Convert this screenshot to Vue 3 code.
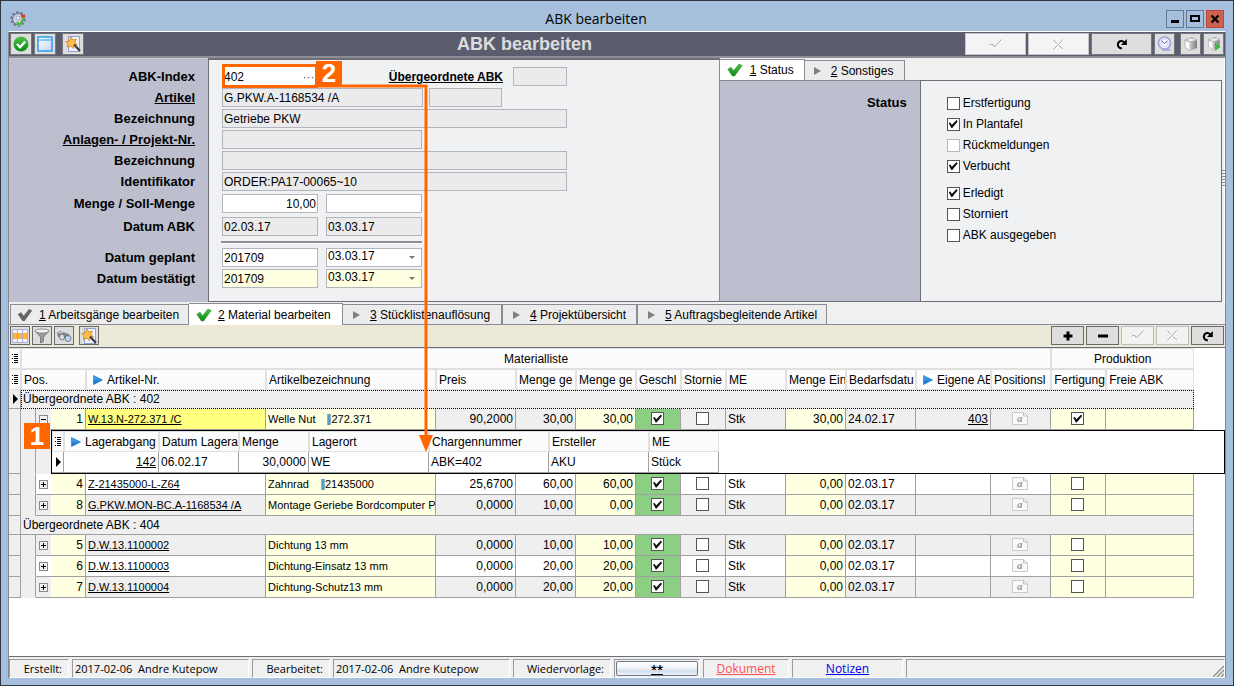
<script setup>
import { ref } from 'vue'

const infoTabs = [
  { no: '1', title: 'Status', active: true, w: 'w-status' },
  { no: '2', title: 'Sonstiges', active: false, w: 'w-misc' }
]
const statusFlags = ref([
  { id: 'first', text: 'Erstfertigung', on: false },
  { id: 'plan', text: 'In Plantafel', on: true },
  { id: 'feedback', text: 'Rückmeldungen', on: false, off: true },
  { id: 'booked', text: 'Verbucht', on: true },
  { id: 'done', text: 'Erledigt', on: true, gap: true },
  { id: 'cancelled', text: 'Storniert', on: false },
  { id: 'issued', text: 'ABK ausgegeben', on: false }
])
const detailTabs = [
  { no: '1', title: 'Arbeitsgänge bearbeiten', icon: 'gray', w: 'w-a' },
  { no: '2', title: 'Material bearbeiten', icon: 'green', active: true, w: 'w-b' },
  { no: '3', title: 'Stücklistenauflösung', icon: 'play', w: 'w-c' },
  { no: '4', title: 'Projektübersicht', icon: 'play', w: 'w-d' },
  { no: '5', title: 'Auftragsbegleitende Artikel', icon: 'play', w: 'w-e' }
]
const columns = [
  'Artikelbezeichnung', 'Preis', 'Menge ge', 'Menge ge', 'Geschl', 'Stornie', 'ME', 'Menge Ein', 'Bedarfsdatu'
]
const groups = ref([
  {
    abk: '402', current: true,
    rows: [
      { pos: 1, art: 'W.13.N-272.371 /C', name: 'Welle Nut', code: '272.371', price: '90,2000', m1: '30,00', m2: '30,00', unit: '30,00', date: '24.02.17', own: '403', made: true, open: true, tone: 'gray', hot: true },
      { pos: 4, art: 'Z-21435000-L-Z64', name: 'Zahnrad', code: '21435000', price: '25,6700', m1: '60,00', m2: '60,00', unit: '0,00', date: '02.03.17', own: '', made: false, tone: 'white' },
      { pos: 8, art: 'G.PKW.MON-BC.A-1168534 /A', name: 'Montage Geriebe Bordcomputer Ph', code: '', price: '0,0000', m1: '10,00', m2: '0,00', unit: '0,00', date: '02.03.17', own: '', made: false, tone: 'gray' }
    ]
  },
  {
    abk: '404',
    rows: [
      { pos: 5, art: 'D.W.13.1100002', name: 'Dichtung 13 mm', code: '', price: '0,0000', m1: '10,00', m2: '10,00', unit: '0,00', date: '02.03.17', own: '', made: false, tone: 'gray' },
      { pos: 6, art: 'D.W.13.1100003', name: 'Dichtung-Einsatz 13 mm', code: '', price: '0,0000', m1: '20,00', m2: '20,00', unit: '0,00', date: '02.03.17', own: '', made: false, tone: 'white' },
      { pos: 7, art: 'D.W.13.1100004', name: 'Dichtung-Schutz13 mm', code: '', price: '0,0000', m1: '20,00', m2: '20,00', unit: '0,00', date: '02.03.17', own: '', made: false, tone: 'gray' }
    ]
  }
])
</script>

<template>
  <div class="window">
    <svg class="defs" width="0" height="0" aria-hidden="true">
      <defs>
        <linearGradient id="gGreen" x1="0" y1="0" x2="0" y2="1"><stop offset="0" stop-color="#4fc24a" /><stop offset="1" stop-color="#0b8a12" /></linearGradient>
        <linearGradient id="gBlue" x1="0" y1="0" x2="0" y2="1"><stop offset="0" stop-color="#55b4f5" /><stop offset="1" stop-color="#0a62c4" /></linearGradient>
        <linearGradient id="gPane" x1="0" y1="0" x2="1" y2="1"><stop offset="0" stop-color="#ffffff" /><stop offset="1" stop-color="#c9d2f7" /></linearGradient>
        <linearGradient id="gCube" x1="0" y1="0" x2="1" y2="0"><stop offset="0" stop-color="#c8c8c8" /><stop offset="1" stop-color="#7c7c7c" /></linearGradient>
      </defs>
      <symbol id="i-wand" viewBox="0 0 16 16">
        <rect x="3.500" y="0.500" width="11" height="15" fill="#eef1fb" stroke="#8fa4cf" />
        <path d="M6 1l1.600 3 3.600-.8-1.400 3.200 2.600 2.400-3.200.6-.8 3.200-2.400-2.400-3.600 1L3 8 .8 5.600l3.400-.4z" fill="#ffc04a" stroke="#d9861a" stroke-width=".9" />
        <path d="M9 8.500l6 6.500" stroke="#3c3f48" stroke-width="2.200" />
      </symbol>
      <symbol id="i-tick" viewBox="0 0 16 14">
        <path d="M.8 6.200L4 4.200l2.600 3.600L12 1l3.200 1.600L7.600 13H5.400z" stroke-linejoin="round" />
      </symbol>
      <symbol id="i-redo" viewBox="0 0 12 12">
        <path d="M5.800 10.600C2.400 10 1.200 7.400 2.200 5c1-2.200 4-2.800 6-.8" fill="none" stroke="#000" stroke-width="2" />
        <path d="M10.800 1v6H5z" fill="#000" />
      </symbol>
      <symbol id="i-dimtick" viewBox="0 0 14 11">
        <path d="M2 7.500l2.500 3L13.500 2" fill="none" stroke="#fff" />
        <path d="M.5 6.500l1-1h2.500l1.500 2.500L12.500.5" fill="none" stroke="#a8a8a8" />
      </symbol>
      <symbol id="i-dimx" viewBox="0 0 13 13">
        <path d="M2 2l10 10M12 2L2 12" fill="none" stroke="#fff" stroke-width="1.500" />
        <path d="M1.500 1.500l3.500 4M7 7.500l4 3.500M11 1.500L1.500 11.500" fill="none" stroke="#a4a4a4" />
      </symbol>
      <symbol id="i-cube" viewBox="0 0 16 16">
        <path d="M2 4l5 2v9l-5-4z" fill="#fbfbfb" stroke="#adadad" stroke-width=".8" />
        <path d="M7 6l7-2v8l-7 3z" fill="url(#gCube)" />
        <path d="M2 4l7-2.500L14 4 7 6z" fill="#eee" stroke="#a5a5a5" stroke-width=".8" />
        <path d="M8 1.500l2 1.500" stroke="#6cc8da" />
      </symbol>
      <symbol id="i-list" viewBox="0 0 7 9">
        <path d="M0 .5h1M0 4.500h1M0 8.500h1M2 .5h4M2 2.500h4M2 4.500h4M2 6.500h4M2 8.500h4" stroke="#000" />
      </symbol>
      <symbol id="i-play" viewBox="0 0 10 10">
        <path d="M.5.5L9.500 5 .5 9.500z" fill="url(#gBlue)" stroke="#2b86dc" stroke-width=".8" />
      </symbol>
    </svg>

    <header class="titlebar">
      <svg class="app-icon" viewBox="0 0 16 16">
        <circle cx="8" cy="8" r="5.500" fill="#cfd2e4" stroke="#6c6f8c" stroke-width="1.200" />
        <circle cx="8" cy="8" r="6.800" fill="none" stroke="#6c6f8c" stroke-width="1.800" stroke-dasharray="2.200 2.100" />
        <circle cx="8" cy="7" r="2" fill="#eef0fa" stroke="#8d90a8" stroke-width=".8" />
        <path d="M7 11l2.500 3L14 6.500" fill="none" stroke="#4cc03a" stroke-width="2.200" />
        <rect x="11" y="3.500" width="4" height="3" fill="#e03a28" />
      </svg>
      <h1>ABK bearbeiten</h1>
      <div class="win-buttons">
        <button aria-label="Minimieren"><svg viewBox="0 0 16 16"><path d="M4 9h8v3H4z" /></svg></button>
        <button aria-label="Maximieren"><svg viewBox="0 0 16 16"><path d="M4 5h8v5H4z" fill="none" stroke="#000" stroke-width="2" /></svg></button>
        <button class="close" aria-label="Schließen"><svg viewBox="0 0 16 16"><path d="M4.500 4.500l7 7M11.500 4.500l-7 7" stroke="#000" stroke-width="2.200" /></svg></button>
      </div>
    </header>

    <main class="client">
      <div class="toolbar">
        <div class="group">
          <button class="tb" aria-label="OK"><svg viewBox="0 0 16 16"><circle cx="8" cy="8" r="7.500" fill="url(#gGreen)" /><path d="M4 8l3 3.200L12.200 5.500" fill="none" stroke="#fff" stroke-width="2.400" /></svg></button>
          <button class="tb" aria-label="Fenster"><svg viewBox="0 0 16 16"><rect x="1" y="1" width="14" height="14" fill="url(#gPane)" stroke="#1e9bf0" stroke-width="1.400" /><path d="M2 4h12" stroke="#1e9bf0" /></svg></button>
          <button class="tb spaced" aria-label="Assistent"><svg><use href="#i-wand" /></svg></button>
        </div>
        <h2>ABK bearbeiten</h2>
        <div class="group end">
          <button class="tb wide" disabled aria-label="Speichern"><svg class="s-tick"><use href="#i-dimtick" /></svg></button>
          <button class="tb wide" disabled aria-label="Verwerfen"><svg class="s-x"><use href="#i-dimx" /></svg></button>
          <button class="tb wide" aria-label="Aktualisieren"><svg class="s-redo"><use href="#i-redo" /></svg></button>
          <button class="tb" aria-label="Uhr"><svg viewBox="0 0 16 16"><path d="M4 12h8l2 3H6z" fill="#aab0dd" /><circle cx="7.500" cy="7" r="6" fill="#eef0ff" stroke="#9aa0d8" stroke-width="1.500" /><circle cx="7.500" cy="7" r="3.500" fill="#fff" stroke="#c8ccf0" /><path d="M4.500 5l3 2.500L10 5.500" fill="none" stroke="#4a50a0" /></svg></button>
          <button class="tb spaced-sm" aria-label="Lager"><svg><use href="#i-cube" /></svg></button>
          <button class="tb" aria-label="Lager starten"><svg viewBox="0 0 16 16"><use href="#i-cube" width="16" height="15" /><path d="M9 6.500l5.500 4.500L9 15z" fill="#3cba3c" /></svg></button>
        </div>
      </div>

      <section class="upper">
        <form class="form" @submit.prevent>
          <div class="labels rows">
            <label for="f-index">ABK-Index</label>
            <label for="f-art"><a href="#artikel">Artikel</a></label>
            <label for="f-bez">Bezeichnung</label>
            <label for="f-proj"><a href="#projekt">Anlagen- / Projekt-Nr.</a></label>
            <label for="f-pbez">Bezeichnung</label>
            <label for="f-ident">Identifikator</label>
            <label for="f-menge">Menge / Soll-Menge</label>
            <label for="f-datum">Datum ABK</label>
            <label for="f-plan">Datum geplant</label>
            <label for="f-best">Datum bestätigt</label>
          </div>
          <div class="fields rows">
            <div class="line">
              <span class="index"><input id="f-index" class="bare" value="402" /><button aria-label="Auswählen">···</button></span>
              <label class="parent" for="f-parent"><a href="#abk">Übergeordnete ABK</a></label>
              <input id="f-parent" class="ro w54" readonly />
            </div>
            <div class="line g6"><input id="f-art" class="ro w201" readonly value="G.PKW.A-1168534 /A" /><input class="ro w73" readonly aria-label="Artikelzusatz" /></div>
            <div class="line"><input id="f-bez" class="ro w345" readonly value="Getriebe PKW" /></div>
            <div class="line"><input id="f-proj" class="ro w200" readonly /></div>
            <div class="line"><input id="f-pbez" class="ro w345" readonly /></div>
            <div class="line"><input id="f-ident" class="ro w345" readonly value="ORDER:PA17-00065~10" /></div>
            <div class="line g8"><input id="f-menge" class="w96 num" value="10,00" /><input class="w96" aria-label="Soll-Menge" /></div>
            <div class="line g8 ruled"><input id="f-datum" class="ro w96" readonly value="02.03.17" /><input class="ro w96" readonly aria-label="Datum ABK bis" value="03.03.17" /></div>
            <div class="line g8"><input id="f-plan" class="w96" value="201709" />
              <span class="pick"><select aria-label="Datum geplant Tag"><option>03.03.17</option></select></span></div>
            <div class="line g8"><input id="f-best" class="w96 yellow" value="201709" />
              <span class="pick"><select class="yellow" aria-label="Datum bestätigt Tag"><option>03.03.17</option></select></span></div>
          </div>
        </form>

        <aside class="info">
          <nav class="tabs top" role="tablist">
            <button v-for="t in infoTabs" :key="t.no" class="tab" :class="[t.w, { active: t.active }]" role="tab">
              <svg v-if="t.active" class="tick green"><use href="#i-tick" /></svg><i v-else class="arrow"></i>
              <span><u>{{ t.no }}</u> {{ t.title }}</span>
            </button>
          </nav>
          <div class="info-body">
            <strong class="info-label">Status</strong>
            <div class="flags">
              <label v-for="f in statusFlags" :key="f.id" :class="{ gap: f.gap }">
                <input v-model="f.on" type="checkbox" :disabled="f.off" />{{ f.text }}
              </label>
            </div>
            <div class="gripper"></div>
          </div>
        </aside>
      </section>

      <nav class="tabs detail" role="tablist">
        <button v-for="t in detailTabs" :key="t.no" class="tab" :class="[t.w, { active: t.active }]" role="tab">
          <svg v-if="t.icon !== 'play'" class="tick" :class="t.icon"><use href="#i-tick" /></svg><i v-else class="arrow"></i>
          <span><u>{{ t.no }}</u> {{ t.title }}</span>
        </button>
      </nav>

      <div class="subbar">
        <div class="group">
          <button class="sb" aria-label="Spalten"><svg viewBox="0 0 16 16"><path d="M0 1h16v14H0z" fill="#f4f6ff" /><path d="M0 5h16v6H0z" fill="#ffb03a" /><path d="M0 1.500h16M0 14.500h16M.5 1v14M5.500 1v14M10.500 1v14M15.500 1v14" stroke="#a9b0d0" /></svg></button>
          <button class="sb" aria-label="Filter"><svg viewBox="0 0 16 16"><path d="M1 3l5.500 6v6l3-1.500V9L15 3z" fill="#9a9a9a" stroke="#707070" stroke-width=".8" /><ellipse cx="8" cy="3" rx="7" ry="2" fill="#f2f2f2" stroke="#777" stroke-width=".8" /></svg></button>
          <button class="sb" aria-label="Suchen"><svg viewBox="0 0 16 16"><path d="M1 6c0-2 2-3 4-2.500L10 5l3 1 2 4-4-1-5 2-4-2z" fill="#85868a" /><ellipse cx="6" cy="9" rx="2.500" ry="3" fill="#d6dff0" stroke="#666" stroke-width=".8" /><ellipse cx="12" cy="10.500" rx="3" ry="3" fill="#bcd8f7" stroke="#5a6270" stroke-width=".8" /><path d="M2.500 5l4-.5" stroke="#e4e4e4" /></svg></button>
          <button class="sb apart" aria-label="Assistent"><svg><use href="#i-wand" /></svg></button>
        </div>
        <div class="group">
          <button class="sb long" aria-label="Hinzufügen"><svg class="s10" viewBox="0 0 10 10"><path d="M5 .5v9M.5 5h9" stroke="#000" stroke-width="3" /></svg></button>
          <button class="sb long" aria-label="Entfernen"><svg class="s10" viewBox="0 0 10 10"><path d="M0 5h10" stroke="#000" stroke-width="3" /></svg></button>
          <button class="sb long" disabled aria-label="Speichern"><svg class="s-tick"><use href="#i-dimtick" /></svg></button>
          <button class="sb long" disabled aria-label="Verwerfen"><svg class="s-x"><use href="#i-dimx" /></svg></button>
          <button class="sb long" aria-label="Aktualisieren"><svg class="s-redo"><use href="#i-redo" /></svg></button>
        </div>
      </div>

      <div class="grid">
        <table class="main-table">
          <colgroup>
            <col class="c12" /><col class="c15" /><col class="c15" /><col class="c35" /><col class="c180" /><col class="c170" />
            <col class="c80" /><col class="c60" /><col class="c60" /><col class="c45" /><col class="c45" /><col class="c60" />
            <col class="c60" /><col class="c70" /><col class="c75" /><col class="c60" /><col class="c55" /><col class="c88" /><col />
          </colgroup>
          <thead>
            <tr>
              <th class="mark"><svg class="list"><use href="#i-list" /></svg></th>
              <th colspan="15" class="mid">Materialliste</th>
              <th colspan="2" class="mid">Produktion</th>
              <td class="rest"></td>
            </tr>
            <tr>
              <th class="mark"><svg class="list"><use href="#i-list" /></svg></th>
              <th colspan="3">Pos.</th>
              <th><svg class="play"><use href="#i-play" /></svg>Artikel-Nr.</th>
              <th v-for="(c, i) in columns" :key="i">{{ c }}</th>
              <th><svg class="play"><use href="#i-play" /></svg>Eigene AB</th>
              <th>Positionsl</th>
              <th>Fertigung</th>
              <th>Freie ABK</th>
              <td class="rest"></td>
            </tr>
          </thead>
          <tbody v-for="g in groups" :key="g.abk">
            <tr class="grp" :class="{ current: g.current }">
              <td class="mark"><i v-if="g.current" class="ptr"></i></td>
              <td colspan="17">Übergeordnete ABK : {{ g.abk }}</td>
              <td class="rest"></td>
            </tr>
            <template v-for="r in g.rows" :key="r.pos">
              <tr class="item" :class="[r.tone, { hot: r.hot }]">
                <td class="mark" :class="{ joined: r.open }"></td>
                <td class="indent"></td>
                <td class="tree"><button :aria-label="r.open ? 'Zuklappen' : 'Aufklappen'" :class="{ open: r.open }"></button></td>
                <td class="y num">{{ r.pos }}</td>
                <td class="art"><a href="#artikel">{{ r.art }}</a></td>
                <td class="y small">{{ r.name }}<template v-if="r.code"><i class="bars"></i>{{ r.code }}</template></td>
                <td class="num">{{ r.price }}</td>
                <td class="num">{{ r.m1 }}</td>
                <td class="y num">{{ r.m2 }}</td>
                <td class="ok mid"><input type="checkbox" checked aria-label="Geschlossen" /></td>
                <td class="mid"><input type="checkbox" aria-label="Storniert" /></td>
                <td>Stk</td>
                <td class="y num">{{ r.unit }}</td>
                <td>{{ r.date }}</td>
                <td class="num"><a v-if="r.own" href="#abk">{{ r.own }}</a></td>
                <td class="mid"><svg class="note" viewBox="0 0 16 13"><path d="M.5.5h11l4 3.500v8.500H.5z" fill="#fafafa" stroke="#cacaca" /><path d="M11.500.5V4h4" fill="none" stroke="#c0c0c0" /><text x="5" y="10">a</text></svg></td>
                <td class="y mid"><input v-model="r.made" type="checkbox" aria-label="Fertigung" /></td>
                <td class="y"></td>
                <td class="rest"></td>
              </tr>
              <tr v-if="r.open" class="nest">
                <td class="mark"></td>
                <td class="indent"></td>
                <td class="indent"></td>
                <td colspan="16" class="holder">
                  <table class="sub-table">
                    <colgroup>
                      <col class="c12" /><col class="c95" /><col class="c80" /><col class="c70" /><col class="c120" /><col class="c120" /><col class="c100" /><col class="c70" /><col />
                    </colgroup>
                    <thead>
                      <tr>
                        <th class="mark"><svg class="list"><use href="#i-list" /></svg></th>
                        <th><svg class="play"><use href="#i-play" /></svg>Lagerabgang</th>
                        <th>Datum Lagera</th><th>Menge</th><th>Lagerort</th><th>Chargennummer</th><th>Ersteller</th><th>ME</th><td class="rest"></td>
                      </tr>
                    </thead>
                    <tbody>
                      <tr>
                        <td class="mark"><i class="ptr"></i></td>
                        <td class="num"><a href="#lager">142</a></td>
                        <td>06.02.17</td><td class="num">30,0000</td><td>WE</td><td>ABK=402</td><td>AKU</td><td>Stück</td><td class="rest"></td>
                      </tr>
                    </tbody>
                  </table>
                </td>
              </tr>
            </template>
          </tbody>
        </table>
      </div>

      <footer class="status">
        <span class="s61 right">Erstellt:</span>
        <span class="s177">2017-02-06&nbsp; Andre Kutepow</span>
        <span class="s78 right">Bearbeitet:</span>
        <span class="s177">2017-02-06&nbsp; Andre Kutepow</span>
        <span class="s98 right">Wiedervorlage:</span>
        <span class="s86 btn"><button><u>**</u></button></span>
        <span class="s86 mid"><a class="red" href="#dokument">Dokument</a></span>
        <span class="s111 mid"><a class="blue" href="#notizen">Notizen</a></span>
        <span class="fill"><svg viewBox="0 0 12 12"><path d="M1 12L12 1M5 12l7-7M9 12l3-3" stroke="#8a8a8a" stroke-width="1.300" /></svg></span>
      </footer>
    </main>

    <div class="frame-2"></div>
    <svg class="route" viewBox="0 0 120 370">
      <path d="M0 2h112v350" fill="none" stroke="#f60" stroke-width="3" />
      <path d="M105 351h14l-7 17z" fill="#f60" />
    </svg>
    <b class="badge two">2</b>
    <b class="badge one">1</b>
  </div>
</template>

<style>
body { margin: 0; }
</style>

<style scoped>
* { box-sizing: border-box; }
.window { position: relative; display: flex; flex-direction: column; min-height: 100vh; padding: 0 7px 7px; border: 1px solid #30363f; background: #a6bfdd; font: 12px/20px "Liberation Sans", Arial, sans-serif; color: #000; overflow: hidden; }
.defs { position: absolute; }
button, input, select { font: inherit; color: inherit; margin: 0; padding: 0; border: 0; border-radius: 0; }
a { color: inherit; }
.mid { text-align: center; }
.num { text-align: right; }

.titlebar { display: flex; align-items: center; height: 30px; padding: 5px 2px 0; }
.app-icon { width: 16px; height: 16px; }
.titlebar h1 { flex: 1; margin: 0; text-align: center; font: 14px/20px "Open Sans", sans-serif; }
.win-buttons { display: flex; gap: 2px; }
.win-buttons button { width: 18px; height: 18px; border: 1px solid #667992; background: transparent; }
.win-buttons .close { background: #cc614f; border-color: #b94a38; }
.win-buttons svg { display: block; width: 16px; height: 16px; }

.client { flex: 1; display: flex; flex-direction: column; background: #f0f0f0; border-top: 1px solid #fff; border-left: 1px solid #85888f; border-right: 1px solid #85888f; }
.toolbar { display: flex; align-items: center; height: 26px; padding: 0 1px; background: #5b5d6e; border-bottom: 2px solid #8e8e96; }
.toolbar h2 { flex: 1; margin: 0; text-align: center; font: bold 18px/22px "Liberation Sans", Arial, sans-serif; color: #dcdcdc; }
.group { display: flex; gap: 2px; }
.tb, .sb { display: flex; align-items: center; justify-content: center; width: 22px; height: 22px; border: 1px solid #77787c; background: #dedede; }
.end .tb { width: 21px; }
.tb svg { width: 16px; height: 16px; }
.tb:disabled { background: #f4f4f4; border-color: #c4c4c4; }
.spaced { margin-left: 4px; }
.spaced-sm { margin-left: 3px; }
.end .tb.wide { width: 61px; }
.group .s-tick { width: 14px; height: 11px; }
.group .s-x { width: 13px; height: 13px; }
.group .s-redo { width: 12px; height: 12px; }

.upper { display: flex; height: 245px; }
.form { flex: 713 1 0; display: flex; padding-bottom: 1px; }
.rows { display: grid; grid-template-rows: repeat(5, 21px) 22px 23px 31px 21px 19px; }
.labels { width: 199px; padding: 8px 13px 0 0; background: #bdbfcf; text-align: right; font-size: 13px; font-weight: bold; line-height: 19px; align-content: start; border-top: 1px solid #c9cad3; }
.fields { flex: 1; padding: 7px 0 0 13px; align-content: start; background: #eff1f3; border: 1px solid #6e6f76; border-top-width: 2px; border-right-color: #8b8c93; }
.line { display: flex; height: 19px; }
.g6 { gap: 6px; }
.g8 { gap: 8px; }
.line input, .line select { height: 19px; padding: 0 1px; border: 1px solid #b2b5bc; background: #fff; outline: 0; }
.line input.ro { background: #ebebec; }
.line .yellow { background: #ffffe1; }
.w54 { width: 54px; }
.w73 { width: 73px; }
.w96 { width: 96px; }
.w200 { width: 200px; }
.w201 { width: 201px; }
.w345 { width: 345px; }
.index { display: flex; width: 96px; background: #fff; }
.index .bare { flex: 1; min-width: 0; border: 0; padding-left: 2px; }
.index button { width: 15px; margin-right: 2px; background: #fff; color: #555; line-height: 14px; }
.parent { flex: none; width: 195px; padding-right: 10px; text-align: right; font-weight: bold; }
.ruled { position: relative; }
.ruled::after { content: ""; position: absolute; left: -1px; top: 24px; width: 201px; height: 2px; background: #8e8f94; border-bottom: 1px solid #fff; }
.pick { position: relative; width: 96px; }
.pick select { display: block; width: 96px; padding-bottom: 2px; line-height: 15px; appearance: none; }
.pick::after { content: ""; position: absolute; right: 7px; top: 8px; border: 3px solid transparent; border-top-color: #777; border-bottom: 0; }

.info { flex: 504 1 0; display: flex; flex-direction: column; padding: 0 2px 1px 0; border-right: 1px solid #fff; }
.tabs { display: flex; align-items: flex-end; }
.tabs.top { height: 22px; }
.tab { display: flex; align-items: center; gap: 7px; height: 20px; padding: 0 7px; border: 1px solid #8b8c93; border-left-width: 0; border-bottom: 0; background: #ececec; white-space: nowrap; text-align: left; }
.tab.active { background: #fff; height: 21px; }
.tick { width: 16px; height: 14px; flex: none; }
.tick.green { fill: url(#gGreen); stroke: #18861a; stroke-width: .5px; }
.tick.gray { fill: #666; }
.arrow { flex: none; margin: 0 3px 0 2px; border: 4px solid transparent; border-left: 7px solid #808080; border-right: 0; }
.w-status { width: 85px; }
.w-misc { width: 100px; }
.info-body { position: relative; flex: 1; display: flex; border-right: 1px solid #6e6f76; border-bottom: 1px solid #6e6f76; }
.info-label { width: 200px; padding: 12px 13px 0 0; background: #bdbfcf; text-align: right; font-size: 13px; border-top: 1px solid #8b8c93; }
.flags { flex: 1; display: flex; flex-direction: column; gap: 1px; padding: 12px 0 0 26px; background: #eff1f3; border-top: 1px solid #6e6f76; border-left: 1px solid #6e6f76; }
.flags label { display: flex; align-items: center; gap: 3px; height: 20px; }
.flags .gap { margin-top: 6px; }
.gripper { position: absolute; right: -4px; top: 90px; width: 3px; height: 18px; background: repeating-linear-gradient(#8a8c92 0 1px, transparent 1px 3px); }
input[type="checkbox"] { appearance: none; position: relative; display: inline-block; vertical-align: top; width: 13px; height: 13px; border: 1px solid #555; background: #fff; }
input[type="checkbox"]:disabled { border-color: #b5b8bd; }
input[type="checkbox"]:checked::before { content: ""; position: absolute; left: 1px; top: 1px; width: 9px; height: 9px; background: #111; clip-path: polygon(0 38%, 18% 32%, 36% 58%, 88% 6%, 100% 22%, 40% 94%, 30% 94%); }

.tabs.detail { height: 22px; padding-left: 1px; border-bottom: 1px solid #8b8c93; }
.detail .tab { height: 20px; gap: 6px; }
.detail .tab:first-child { border-left-width: 1px; padding-left: 6px; }
.detail .tab.active { height: 22px; margin-bottom: -1px; }
.detail .tab .arrow { margin: 0 4px 0 3px; }
.detail .tab:nth-child(n+3) { border-right-width: 2px; }
.detail .tab:last-child { border-right-width: 1px; }
.w-a { width: 179px; }
.w-b { width: 154px; }
.w-c { width: 160px; }
.w-d { width: 135px; }
.w-e { width: 189px; }

.subbar { display: flex; justify-content: space-between; padding: 1px 1px 2px; background: #ece9d8; }
.sb { width: 20px; height: 19px; border-color: #6a6a6a; }
.sb svg { width: 16px; height: 16px; }
.sb.apart { margin-left: 3px; }
.sb.long { width: 33px; }
.sb:disabled { background: #f2f2f2; border-color: #bcbcbc; }
.group .s10 { width: 10px; height: 10px; }

.grid { flex: 1; background: #fff; border-top: 1px solid #6e6f76; border-bottom: 1px solid #6e6f76; }
table { width: 100%; table-layout: fixed; border-collapse: separate; border-spacing: 0; }
.c12 { width: 12px; } .c15 { width: 15px; } .c35 { width: 35px; } .c45 { width: 45px; } .c55 { width: 55px; } .c60 { width: 60px; }
.c70 { width: 70px; } .c75 { width: 75px; } .c80 { width: 80px; } .c88 { width: 88px; } .c95 { width: 95px; } .c100 { width: 100px; }
.c120 { width: 120px; } .c170 { width: 170px; } .c180 { width: 180px; }
th, td { height: 21px; padding: 0 2px; line-height: 20px; overflow: hidden; white-space: nowrap; text-align: left; border-right: 1px solid #a0a0a0; border-bottom: 1px solid #a0a0a0; }
th { font-weight: normal; background: #fcfcfc; border: 1px solid #e0e0e0; padding-top: 2px; line-height: 17px; }
th.mid { text-align: center; }
td.num { text-align: right; }
td.mid { padding: 0 2px 0 1px; text-align: center; }
.mark { padding: 0; background: #f0f0f0; }
th.mark { background: #fcfcfc; text-align: center; }
.list { display: block; width: 7px; height: 9px; margin: 0 auto; }
.play { width: 10px; height: 10px; margin: 0 4px 0 4px; vertical-align: -1px; }
td.rest { border: 0; background: #fff; }
.grp td { height: 19px; line-height: 18px; background: #efefef; border-bottom-color: #efefef; }
.grp td.rest { background: #fff; border: 0; }
.grp td.mark { border-bottom-color: #a0a0a0; }
.grp td:nth-child(2) { border-bottom-color: #a0a0a0; }
.grp.current td:nth-child(2) { border: 1px dotted #000; padding-left: 1px; line-height: 17px; }
.ptr { display: block; width: 5px; margin-left: 4px; border: 5px solid transparent; border-left: 5px solid #000; border-right: 0; }
.gray td { background: #efefef; }
.white td { background: #fff; }
.item td.mark, .item td.indent, .nest .indent { background: #efefef; }
.item td.indent, .nest .indent { border-bottom-color: #efefef; }
.nest td.indent:nth-child(3) { border-right: 0; }
.mark.joined { border-bottom-color: #f0f0f0; }
.item td.tree { padding: 0 3px; border-right: 0; }
.tree button { position: relative; display: block; width: 9px; height: 9px; border: 1px solid #8a8a8a; background: #f0f0f0; }
.tree button::before, .tree button::after { content: ""; position: absolute; left: 1px; top: 3px; width: 5px; height: 1px; background: #000; }
.tree button::after { left: 3px; top: 1px; width: 1px; height: 5px; }
.tree button.open::after { display: none; }
.item td.y { background: #ffffe1; }
.item td.ok { background: #8bce84; }
.item.hot td.art { background: #ffff80; }
.item td.rest { background: #fff; }
td.small, td.art { font-size: 11px; }
.mid input[type="checkbox"] { margin-top: 3px; }
.bars { display: inline-block; width: 4px; height: 11px; margin: 0 0 0 12px; vertical-align: -2px; background: linear-gradient(90deg, #d9a066 0 1px, #5b9bc8 1px 3px, #8fb6d0 3px); }
.note { display: inline-block; width: 16px; height: 13px; vertical-align: -2px; }
.note text { font: italic bold 11px/11px "Liberation Serif", serif; fill: #999; }
td.holder { height: 44px; padding: 0; border: 1px solid #000; background: #fff; }
.sub-table .mark { background: #fff; }

.status { display: flex; gap: 3px; height: 21px; padding-top: 2px; font: 11px/17px "Open Sans", sans-serif; }
.status > span { flex: none; border: 1px solid #fff; border-top-color: #9a9a9a; border-left-color: #9a9a9a; padding: 0 2px; white-space: nowrap; }
.status > .right { text-align: right; padding-right: 6px; }
.status > .mid { font-size: 12px; }
.s61 { width: 60px; } .s78 { width: 78px; } .s86 { width: 86px; } .s98 { width: 98px; } .s111 { width: 111px; } .s177 { width: 177px; }
.status > .fill { flex: 1; display: flex; justify-content: flex-end; align-items: flex-end; padding: 0; }
.fill svg { width: 12px; height: 12px; }
.status > .btn { padding: 1px; }
.btn button { display: block; width: 100%; height: 15px; line-height: 14px; border: 1px solid #707a88; border-radius: 2px; background: linear-gradient(#fff, #eef2f8 50%, #cfdbec 70%, #f2f5fa); font-weight: bold; }
.red { color: #ff5050; }
.blue { color: #0000f0; }

.frame-2 { position: absolute; left: 221px; top: 63px; width: 96px; height: 24px; border: 3px solid #f60; pointer-events: none; }
.route { position: absolute; left: 313px; top: 83px; width: 120px; height: 370px; pointer-events: none; }
.badge { position: absolute; width: 26px; height: 26px; background: #f60; color: #fff; text-align: center; font: bold 26px/26px "Liberation Sans", Arial, sans-serif; }
.badge.two { left: 315px; top: 60px; height: 24px; line-height: 25px; }
.badge.one { left: 23px; top: 422px; }
</style>
